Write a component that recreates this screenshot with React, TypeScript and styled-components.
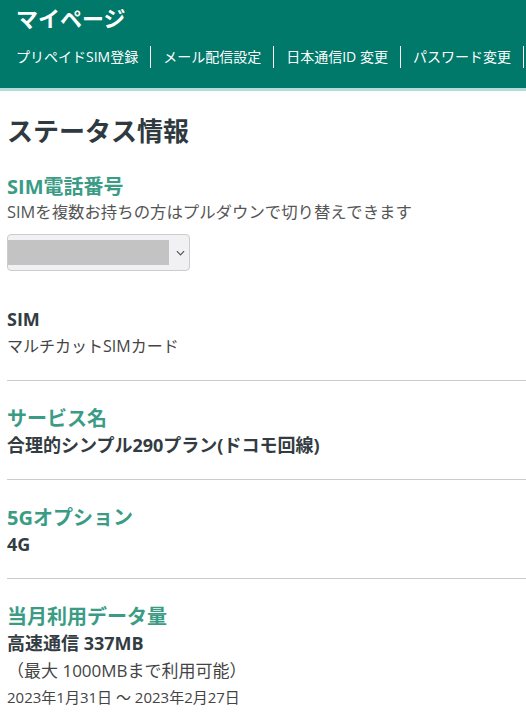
import React from 'react';
import styled, { createGlobalStyle } from 'styled-components';

const GlobalStyle = createGlobalStyle`
  html, body {
    margin: 0;
    padding: 0;
    background: #fff;
    overflow: hidden;
  }
  body {
    font-family: "Open Sans", "Noto Sans CJK JP", sans-serif;
    color: #333c42;
  }
`;

const navItems = ['プリペイドSIM登録', 'メール配信設定', '日本通信ID 変更', 'パスワード変更'];

const App: React.FC = () => {
  return (
    <React.Fragment>
      <GlobalStyle />
      <Header>
        <h1>マイページ</h1>
        <Nav>
          {navItems.map((item) => (
            <NavLink key={item} href="#">{item}</NavLink>
          ))}
        </Nav>
      </Header>

      <Main>
        <PageTitle>ステータス情報</PageTitle>

        <Section>
          <Label>SIM電話番号</Label>
          <Note>SIMを複数お持ちの方はプルダウンで切り替えできます</Note>
          <SelectBox>
            <div className='masked'></div>
            <Chevron viewBox="0 0 10 6">
              <path d="M1 1l4 4 4-4" fill="none" stroke="#555" strokeWidth="1.3" />
            </Chevron>
          </SelectBox>
        </Section>

        <Section $first>
          <Value>SIM</Value>
          <Plain>マルチカットSIMカード</Plain>
        </Section>

        <Divider />

        <Section>
          <Label>サービス名</Label>
          <Value>合理的シンプル290プラン(ドコモ回線)</Value>
        </Section>

        <Divider />

        <Section>
          <Label>5Gオプション</Label>
          <Value>4G</Value>
        </Section>

        <Divider />

        <Section>
          <Label>当月利用データ量</Label>
          <Value>高速通信 337MB</Value>
          <Plain $size={17}>（最大 1000MBまで利用可能）</Plain>
          <Small>2023年1月31日 〜 2023年2月27日</Small>
        </Section>
      </Main>
    </React.Fragment>
  );
};

const Header = styled.header`
  background-color: #00786a;
  border-bottom: 3px solid #b4dcd6;
  padding: 4px 0 0 16px;
  box-sizing: border-box;
  height: 91px;

  h1 {
    margin: 0;
    color: #fff;
    font-size: 22px;
    font-weight: 700;
    line-height: 28px;
  }
`;

const Nav = styled.nav`
  display: flex;
  white-space: nowrap;
  margin-top: 14px;
`;

const NavLink = styled.a`
  color: #fff;
  text-decoration: none;
  font-size: 14px;
  line-height: 22px;
  padding: 0 12px;
  border-right: 1px solid #fff;

  &:first-child {
    padding-left: 0;
  }
`;

const Main = styled.main`
  padding: 0 0 0 7px;
`;

const PageTitle = styled.h2`
  margin: 0;
  padding-top: 22px;
  font-size: 26px;
  font-weight: 700;
  line-height: 36px;
  color: #2f3a40;
`;

const Section = styled.section<{ $first?: boolean }>`
  padding: ${(p) => (p.$first ? '15px 0 20px' : '24px 0 20px')};
`;

const Label = styled.h3`
  margin: 0;
  font-size: 20px;
  font-weight: 700;
  line-height: 27px;
  color: #3b9c85;
`;

const Note = styled.p`
  margin: 0;
  font-size: 16.4px;
  line-height: 24px;
  color: #555;
`;

const SelectBox = styled.div`
  display: flex;
  align-items: center;
  justify-content: space-between;
  width: 183px;
  height: 37px;
  box-sizing: border-box;
  margin-top: 10px;
  border: 1px solid #ccc;
  border-radius: 4px;
  background: #f1f1f3;
  padding-right: 4px;

  .masked {
    width: 161px;
    height: 25px;
    background: #c3c3c3;
  }
`;

const Chevron = styled.svg`
  width: 9px;
  height: 6px;
`;

const Value = styled.p`
  margin: 0;
  font-size: 18px;
  font-weight: 700;
  line-height: 27px;
  color: #333c42;
`;

const Plain = styled.p<{ $size?: number }>`
  margin: 0;
  font-size: ${(p) => p.$size ?? 16}px;
  line-height: 27px;
  color: #444;
`;

const Small = styled.p`
  margin: 0;
  font-size: 15px;
  line-height: 26px;
  color: #444;
`;

const Divider = styled.hr`
  margin: 0;
  border: none;
  border-top: 1px solid #ccc;
`;

export default App;
